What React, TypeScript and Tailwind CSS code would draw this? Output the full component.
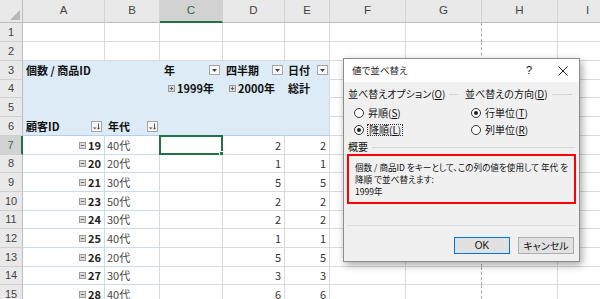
import React from 'react';

const cjk = "font-['Noto_Sans_CJK_JP',sans-serif]";

function DropBtn() {
  return (
    <span className="flex h-[10px] w-[11px] shrink-0 items-center justify-center border border-[#a6a6a6] bg-[#f7f7f7]">
      <svg width="5" height="3" viewBox="0 0 5 3">
        <path d="M0 0h5L2.5 3z" fill="#444" />
      </svg>
    </span>
  );
}

function SortBtn() {
  return (
    <span className="flex h-[11px] w-[11px] shrink-0 items-center justify-center border border-[#a6a6a6] bg-[#f7f7f7]">
      <svg width="9" height="9" viewBox="0 0 9 9">
        <path d="M1 5.5h3.4L2.7 7.3z" fill="#444" />
        <path d="M6.5 1.5v5.5M5.3 5.8l1.2 1.4 1.2-1.4" stroke="#444" strokeWidth="0.9" fill="none" />
      </svg>
    </span>
  );
}

function PM({ minus }: { minus?: boolean }) {
  return (
    <svg width="7" height="7" viewBox="0 0 7 7" className="shrink-0">
      <rect x="0.5" y="0.5" width="6" height="6" fill="#dcdcdc" stroke="#9a9a9a" />
      <path d="M1.8 3.5h3.4" stroke="#555" strokeWidth="0.9" />
      {!minus && <path d="M3.5 1.8v3.4" stroke="#555" strokeWidth="0.9" />}
    </svg>
  );
}

const colW = ['w-[82px]', 'w-[55px]', 'w-[63px]', 'w-[62px]', 'w-[45px]', 'w-[76px]', 'w-[76px]', 'w-[76px]', 'w-[60px]'];
const letters = ['A', 'B', 'C', 'D', 'E', 'F', 'G', 'H', 'I'];
const rowH = ['h-[19px]', 'h-[19px]', 'h-[19px]', 'h-[18px]', 'h-[19px]', 'h-[19px]', 'h-[19px]', 'h-[18px]', 'h-[19px]', 'h-[19px]', 'h-[18px]', 'h-[19px]', 'h-[19px]', 'h-[18px]', 'h-[19px]'];

const data: [string, string, string][] = [
  ['19', '40代', '2'],
  ['20', '20代', '1'],
  ['21', '30代', '5'],
  ['23', '50代', '2'],
  ['24', '30代', '2'],
  ['25', '40代', '1'],
  ['26', '20代', '5'],
  ['27', '30代', '3'],
  ['28', '40代', '6'],
];

function Cell({ i, cls = '', children }: { i: number; cls?: string; children?: React.ReactNode }) {
  const gBorder = i === 6 ? 'border-r border-r-[#a8a8a8] [border-right-style:dashed]' : 'border-r';
  return (
    <div className={`relative flex shrink-0 items-center border-b ${colW[i]} ${cls || 'border-[#dadada]'} ${gBorder}`}>
      {children}
    </div>
  );
}

function RowHead({ n, h, sel }: { n: number; h: string; sel?: boolean }) {
  return (
    <div
      className={`flex w-[23px] shrink-0 items-center justify-center border-b border-b-[#d0d0d0] ${h} ${
        sel ? 'border-r-2 border-r-[#217346] bg-[#d2d2d2] text-[#217346]' : 'border-r border-r-[#bdbdbd] bg-[#e9e9e9] text-[#444]'
      } font-['Liberation_Sans',sans-serif] text-[11px]`}
    >
      {n}
    </div>
  );
}

const pv = 'bg-[#ddebf7] border-[#ddebf7]';
const pvE = 'bg-[#ddebf7] border-b-[#ddebf7] border-r-[#dadada]';
const pv6 = 'bg-[#ddebf7] border-r-[#ddebf7] border-b-[#b4cfe9]';
const pv6E = 'bg-[#ddebf7] border-r-[#dadada] border-b-[#b4cfe9]';
const rh = 'border-[#c9dbee]';

function Sheet() {
  const rows: React.ReactNode[] = [];
  for (let r = 1; r <= 15; r++) {
    const h = rowH[r - 1];
    let cells: React.ReactNode[] = [];
    if (r <= 2) {
      cells = letters.map((_, i) => <Cell key={i} i={i} />);
    } else if (r >= 3 && r <= 6) {
      cells = letters.map((_, i) => {
        const isPv = i <= 4;
        let cls = '';
        if (isPv) {
          if (r === 6) cls = i === 4 ? pv6E : pv6;
          else cls = i === 4 ? pvE : pv;
        }
        let content: React.ReactNode = null;
        if (r === 3 && i === 0) content = <span className="pl-[3px] font-bold">個数 / 商品ID</span>;
        if (r === 3 && i === 2)
          content = (
            <div className="flex w-full items-center justify-between pl-[4px] pr-[2px]">
              <span className="font-bold">年</span>
              <DropBtn />
            </div>
          );
        if (r === 3 && i === 3)
          content = (
            <div className="flex w-full items-center justify-between pl-[3px] pr-[1px]">
              <span className="font-bold">四半期</span>
              <DropBtn />
            </div>
          );
        if (r === 3 && i === 4)
          content = (
            <div className="flex w-full items-center justify-between pl-[3px] pr-[1px]">
              <span className="font-bold">日付</span>
              <DropBtn />
            </div>
          );
        if (r === 4 && i === 2)
          content = (
            <div className="flex items-center gap-[2px] pl-[8px]">
              <PM />
              <span className="font-bold">1999年</span>
            </div>
          );
        if (r === 4 && i === 3)
          content = (
            <div className="flex items-center gap-[2px] pl-[6px]">
              <PM />
              <span className="font-bold">2000年</span>
            </div>
          );
        if (r === 4 && i === 4) content = <span className="pl-[3px] font-bold">総計</span>;
        if (r === 6 && i === 0)
          content = (
            <div className="flex w-full items-center justify-between pl-[3px] pr-[2px]">
              <span className="font-bold">顧客ID</span>
              <SortBtn />
            </div>
          );
        if (r === 6 && i === 1)
          content = (
            <div className="flex w-full items-center justify-between pl-[3px] pr-[1px]">
              <span className="font-bold">年代</span>
              <SortBtn />
            </div>
          );
        return (
          <Cell key={i} i={i} cls={cls}>
            {content}
          </Cell>
        );
      });
    } else {
      const d = data[r - 7];
      cells = letters.map((_, i) => {
        if (i === 0)
          return (
            <Cell key={i} i={i} cls={rh}>
              <div className="flex w-full items-center justify-end gap-[2px] pr-[3px]">
                <PM minus />
                <span className="font-bold text-[#222]">{d[0]}</span>
              </div>
            </Cell>
          );
        if (i === 1)
          return (
            <Cell key={i} i={i} cls="border-b-[#c9dbee] border-r-[#dadada]">
              <span className="pl-[2px] text-[#4a4a4a]">{d[1]}</span>
            </Cell>
          );
        if (i === 2)
          return (
            <Cell key={i} i={i}>
              {r === 7 && (
                <div className="absolute -left-[1px] -top-[1px] bottom-[-1px] right-[-1px] border-2 border-[#217346]">
                  <div className="absolute -bottom-[3px] -right-[3px] h-[5px] w-[5px] border border-white bg-[#217346]" />
                </div>
              )}
            </Cell>
          );
        if (i === 3 || i === 4)
          return (
            <Cell key={i} i={i}>
              <span className="ml-auto pr-[3px] text-[#333]">{d[2]}</span>
            </Cell>
          );
        return <Cell key={i} i={i} />;
      });
    }
    rows.push(
      <div key={r} className={`flex ${h}`}>
        <RowHead n={r} h={h} sel={r === 7} />
        {cells}
      </div>
    );
  }

  return (
    <div className={`flex flex-col text-[11px] leading-none text-[#111] ${cjk}`}>
      <div className="flex h-[23px]">
        <div className="relative w-[23px] shrink-0 border-b border-r border-[#bdbdbd] bg-[#e9e9e9]">
          <svg width="10" height="10" viewBox="0 0 10 10" className="absolute bottom-[2px] right-[2px]">
            <path d="M10 0V10H0z" fill="#b8b8b8" />
          </svg>
        </div>
        {letters.map((l, i) => (
          <div
            key={l}
            className={`flex shrink-0 items-center justify-center ${colW[i]} font-['Liberation_Sans',sans-serif] text-[11.5px] ${
              i === 2
                ? 'border-b-2 border-r border-b-[#217346] border-r-[#cfcfcf] bg-[#d2d2d2] text-[#217346]'
                : 'border-b border-r border-b-[#bdbdbd] border-r-[#d4d4d4] bg-[#e9e9e9] text-[#444]'
            }`}
          >
            {l}
          </div>
        ))}
      </div>
      {rows}
    </div>
  );
}

function Radio({ on }: { on?: boolean }) {
  return (
    <span className="flex h-[10px] w-[10px] shrink-0 items-center justify-center rounded-full border border-[#333] bg-white">
      {on && <span className="h-[4px] w-[4px] rounded-full bg-[#222]" />}
    </span>
  );
}

function Dialog() {
  return (
    <div
      className={`absolute left-[343px] top-[58px] flex h-[204px] w-[237px] flex-col border border-[#8c8c8c] bg-[#f0f0f0] text-[10px] leading-none text-[#111] shadow-[2px_3px_8px_rgba(0,0,0,0.35)] ${cjk} [font-feature-settings:'palt']`}
    >
      <div className="flex h-[23px] shrink-0 items-center bg-white pl-[8px]">
        <span className="text-[9.5px] text-[#222]">値で並べ替え</span>
        <span className="ml-auto mr-[26px] font-['Liberation_Sans',sans-serif] text-[11px]">?</span>
        <svg width="10" height="10" viewBox="0 0 10 10" className="mr-[11px]">
          <path d="M0.5 0.5l9 9M9.5 0.5l-9 9" stroke="#222" strokeWidth="1" />
        </svg>
      </div>
      <div className="flex flex-1 flex-col px-[3px]">
        <div className="mt-[5px] flex">
          <div className="flex w-[118px] shrink-0 flex-col">
            <div className="flex h-[14px] items-center pl-[1px]">
              <span className="whitespace-nowrap">
                並べ替えオプション(<u>O</u>)
              </span>
              <span className="ml-[4px] mr-[6px] h-px flex-1 bg-[#d5d5d5]" />
            </div>
            <div className="mt-[5px] flex h-[14px] items-center gap-[3px] pl-[7px]">
              <Radio />
              <span className="px-[1px]">
                昇順(<u>S</u>)
              </span>
            </div>
            <div className="mt-[3px] flex h-[14px] items-center gap-[3px] pl-[7px]">
              <Radio on />
              <span className="border border-dotted border-[#333] px-[1px]">
                降順(<u>L</u>)
              </span>
            </div>
          </div>
          <div className="flex flex-1 flex-col">
            <div className="flex h-[14px] items-center">
              <span className="whitespace-nowrap">
                並べ替えの方向(<u>D</u>)
              </span>
              <span className="ml-[4px] mr-[4px] h-px flex-1 bg-[#d5d5d5]" />
            </div>
            <div className="mt-[5px] flex h-[14px] items-center gap-[3px] pl-[6px]">
              <Radio on />
              <span className="px-[1px]">
                行単位(<u>T</u>)
              </span>
            </div>
            <div className="mt-[3px] flex h-[14px] items-center gap-[3px] pl-[6px]">
              <Radio />
              <span className="px-[1px]">
                列単位(<u>R</u>)
              </span>
            </div>
          </div>
        </div>
        <div className="mt-[4px] flex h-[12px] items-center pl-[1px]">
          <span>概要</span>
          <span className="ml-[4px] mr-[1px] h-px flex-1 bg-[#d5d5d5]" />
        </div>
        <div className="mt-[1px] flex h-[50px] flex-col justify-center border-2 border-[#ff0000] pl-[6px] text-[8.6px] leading-[12px]">
          <span className="whitespace-nowrap">個数 / 商品ID をキーとして、この列の値を使用して 年代 を</span>
          <span>降順 で並べ替えます:</span>
          <span>1999年</span>
        </div>
        <div className="mt-[21px] h-px bg-[#dcdcdc]" />
        <div className="mt-[11px] flex justify-end gap-[8px] pr-[2px]">
          <button className="flex h-[17px] w-[56px] items-center justify-center border border-[#0078d7] bg-[#e1e1e1] font-['Liberation_Sans',sans-serif] text-[10px]">
            OK
          </button>
          <button className="flex h-[17px] w-[56px] items-center justify-center border border-[#adadad] bg-[#e1e1e1] text-[10px]">
            キャンセル
          </button>
        </div>
      </div>
    </div>
  );
}

export default function App() {
  return (
    <div className="relative h-[299px] w-[600px] overflow-hidden bg-white">
      <Sheet />
      <Dialog />
    </div>
  );
}
